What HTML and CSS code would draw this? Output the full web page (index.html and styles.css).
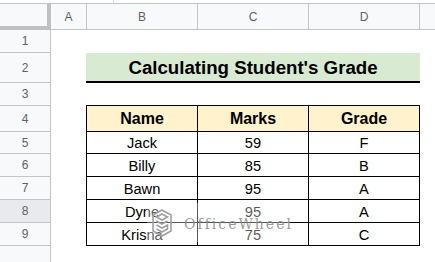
FILE: index.html
```html
<!DOCTYPE html>
<html>
<head>
<meta charset="utf-8">
<link rel="stylesheet" href="styles.css">
</head>
<body>
<div class="sheet">
  <div class="strip"><div class="strip-tab"></div></div>
  <div class="colheads">
    <div class="corner"></div>
    <div class="ch ch-a">A</div>
    <div class="ch ch-b">B</div>
    <div class="ch ch-c">C</div>
    <div class="ch ch-d">D</div>
    <div class="ch ch-e"></div>
  </div>
  <div class="body">
    <div class="rowheads">
      <div class="rh r23">1</div>
      <div class="rh r30">2</div>
      <div class="rh r23">3</div>
      <div class="rh r26">4</div>
      <div class="rh r22">5</div>
      <div class="rh r23">6</div>
      <div class="rh r23">7</div>
      <div class="rh r23 sel">8</div>
      <div class="rh r23">9</div>
      <div class="rh rlast"></div>
    </div>
    <div class="content">
      <div class="title">Calculating Student's Grade</div>
      <div class="table">
        <div class="th r26">Name</div>
        <div class="th r26">Marks</div>
        <div class="th r26">Grade</div>
        <div class="td r22">Jack</div><div class="td r22">59</div><div class="td r22">F</div>
        <div class="td r23">Billy</div><div class="td r23">85</div><div class="td r23">B</div>
        <div class="td r23">Bawn</div><div class="td r23">95</div><div class="td r23">A</div>
        <div class="td r23">Dyne</div><div class="td r23">95</div><div class="td r23">A</div>
        <div class="td r23">Krisna</div><div class="td r23">75</div><div class="td r23">C</div>
      </div>
    </div>
  </div>
  <div class="watermark">
    <svg class="wm-logo" width="22" height="30" viewBox="0 0 22 30">
      <g fill="none" stroke="#a0a0a0" stroke-width="1.6">
        <path d="M11 2 L20 7 L20 23 L11 28 L2 23 L2 7 Z"/>
        <path d="M11 6 L16.5 9 L11 12 L5.5 9 Z"/>
        <path d="M5.5 13 L11 16 L16.5 13"/>
        <path d="M5.5 17 L11 20 L16.5 17 L16.5 21 L11 24 L5.5 21"/>
      </g>
    </svg>
    <span class="wm-text">OfficeWheel</span>
  </div>
</div>
</body>
</html>
```

FILE: styles.css
```css
* { box-sizing: border-box; }
html, body { margin: 0; padding: 0; background: #fff; }
body { width: 435px; height: 262px; overflow: hidden; font-family: "Liberation Sans", Arial, sans-serif; }

.sheet { position: relative; width: 435px; height: 262px; overflow: hidden; display: flex; flex-direction: column; }

.strip { height: 4px; border-bottom: 1px solid #c4c4c4; position: relative; background: #fff; }
.strip-tab { position: absolute; left: 113px; top: 0; width: 1px; height: 3px; background: #dcdcdc; }

.colheads { display: flex; height: 26px; }
.corner { width: 51px; background: #f8f9fa; border-right: 4px solid #c0c0c0; border-bottom: 4px solid #c0c0c0; }
.ch { background: #f8f9fa; border-right: 1px solid #c4c4c4; border-bottom: 1px solid #c4c4c4; color: #5f6368; font-size: 12px; display: flex; align-items: center; justify-content: center; padding-top: 1px; }
.ch-a { width: 36px; }
.ch-b, .ch-c, .ch-d { width: 111px; }
.ch-e { flex: 1; border-right: none; }

.body { display: flex; flex: 1; }
.rowheads { width: 51px; display: flex; flex-direction: column; }
.rh { background: #f8f9fa; border-right: 1px solid #c4c4c4; border-bottom: 1px solid #c4c4c4; color: #5f6368; font-size: 12px; display: flex; align-items: center; justify-content: center; }
.rh.sel { background: #e8eaed; }
.rh.rlast { flex: 1; border-bottom: none; }

.r22 { height: 22px; }
.r23 { height: 23px; }
.r26 { height: 26px; }
.r30 { height: 30px; }

.content { padding: 23px 0 0 35px; display: flex; flex-direction: column; align-items: flex-start; }
.title { width: 334px; height: 30px; background: #d9ead3; border-bottom: 2px solid #000; font-weight: bold; font-size: 18.67px; color: #000; display: flex; align-items: center; justify-content: center; padding-top: 1px; }

.table { margin-top: 22px; width: 334px; display: grid; grid-template-columns: 111px 111px 111px; border-top: 1px solid #000; border-left: 1px solid #000; }
.th, .td { border-right: 1px solid #000; border-bottom: 1px solid #000; display: flex; align-items: center; justify-content: center; color: #000; }
.th { background: #fff2cc; font-weight: bold; font-size: 16px; }
.td { font-size: 14.67px; padding-top: 1px; }

.watermark { position: absolute; left: 147px; top: 203px; width: 143px; height: 39px; background: rgba(255,255,255,0.35); display: flex; align-items: center; gap: 11px; padding-left: 4px; }
.wm-logo { flex: none; }
.wm-text { font-family: "DejaVu Serif", "Liberation Serif", serif; font-size: 14px; letter-spacing: 2px; color: rgba(135,135,135,0.85); padding-top: 2px; }
```
